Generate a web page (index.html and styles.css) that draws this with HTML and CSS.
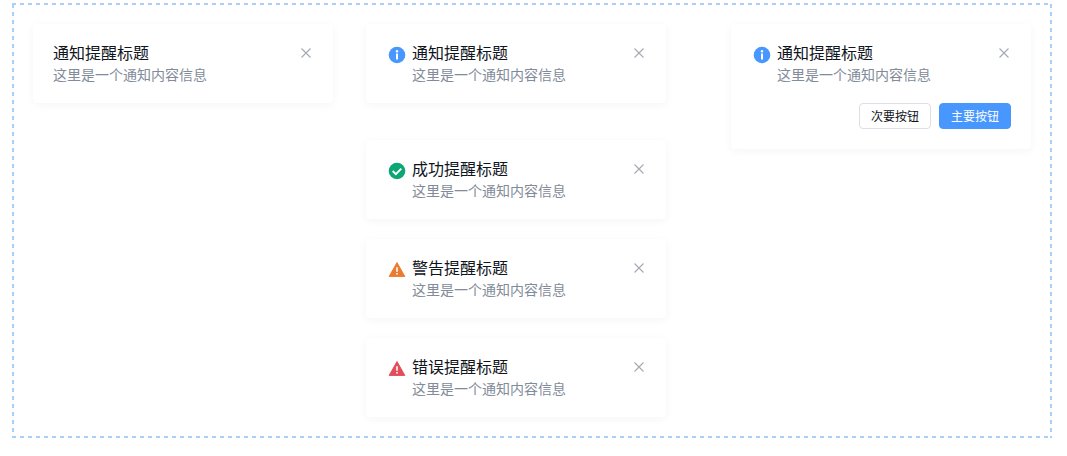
FILE: index.html
```html
<!DOCTYPE html>
<html lang="zh-CN">
<head>
<meta charset="utf-8">
<meta name="viewport" content="width=device-width, initial-scale=1">
<title>通知提醒</title>
<link rel="stylesheet" href="styles.css">
</head>
<body>
<svg class="sprite" aria-hidden="true">
  <symbol id="info" viewBox="0 0 18 18"><circle cx="9" cy="9" r="8.3" fill="#4797ff"/><circle cx="9" cy="5.2" r="1.2" fill="#fff"/><path d="M8 7.6h2v5.8H8z" fill="#fff"/></symbol>
  <symbol id="success" viewBox="0 0 18 18"><circle cx="9" cy="9" r="8.3" fill="#0aa673"/><path d="M4.7 9l3.1 3.1 5.5-5.5" fill="none" stroke="#fff" stroke-width="1.9"/></symbol>
  <symbol id="alert" viewBox="0 0 18 18"><path d="M9 1.6L16.8 15.4H1.2z" fill="currentColor" stroke="currentColor" stroke-width="1" stroke-linejoin="round"/><path d="M8.2 6.3h1.6v4.4H8.2zM8.2 12h1.6v1.6H8.2z" fill="#fff"/></symbol>
  <symbol id="close" viewBox="0 0 14 14"><path d="M2.5 2.5L11.5 11.5M11.5 2.5L2.5 11.5" fill="none" stroke="currentColor" stroke-width="1.1"/></symbol>
</svg>
<main class="frame">
  <section class="column">
    <article class="notice">
      <div class="body"><h2 class="title">通知提醒标题</h2><p class="text">这里是一个通知内容信息</p></div>
      <button class="close" type="button" aria-label="关闭"><svg><use href="#close"/></svg></button>
    </article>
  </section>
  <section class="column">
    <article class="notice notice-lead">
      <svg class="icon"><use href="#info"/></svg>
      <div class="body"><h2 class="title">通知提醒标题</h2><p class="text">这里是一个通知内容信息</p></div>
      <button class="close" type="button" aria-label="关闭"><svg><use href="#close"/></svg></button>
    </article>
    <article class="notice">
      <svg class="icon"><use href="#success"/></svg>
      <div class="body"><h2 class="title">成功提醒标题</h2><p class="text">这里是一个通知内容信息</p></div>
      <button class="close" type="button" aria-label="关闭"><svg><use href="#close"/></svg></button>
    </article>
    <article class="notice">
      <svg class="icon icon-warning"><use href="#alert"/></svg>
      <div class="body"><h2 class="title">警告提醒标题</h2><p class="text">这里是一个通知内容信息</p></div>
      <button class="close" type="button" aria-label="关闭"><svg><use href="#close"/></svg></button>
    </article>
    <article class="notice">
      <svg class="icon icon-error"><use href="#alert"/></svg>
      <div class="body"><h2 class="title">错误提醒标题</h2><p class="text">这里是一个通知内容信息</p></div>
      <button class="close" type="button" aria-label="关闭"><svg><use href="#close"/></svg></button>
    </article>
  </section>
  <section class="column column-end">
    <article class="notice notice-actions">
      <svg class="icon"><use href="#info"/></svg>
      <div class="body"><h2 class="title">通知提醒标题</h2><p class="text">这里是一个通知内容信息</p></div>
      <button class="close" type="button" aria-label="关闭"><svg><use href="#close"/></svg></button>
      <div class="actions">
        <button class="button" type="button">次要按钮</button>
        <button class="button button-primary" type="button">主要按钮</button>
      </div>
    </article>
  </section>
</main>
</body>
</html>
```
FILE: styles.css
```css
* {
  box-sizing: border-box;
}

body {
  margin: 0;
  padding: 3px 15px 18px 12px;
  background: #fff;
  font-family: "Noto Sans CJK SC", sans-serif;
}

.sprite {
  display: none;
}

/* Dashed outline: 4px dashes with 4px gaps along each side */
.frame {
  --dash: #a9cffc 0 4px, transparent 4px 8px;
  --dash-side: transparent 0 1px, #a9cffc 1px 5px, transparent 5px 8px;
  display: flex;
  align-items: flex-start;
  gap: 33px;
  padding: 21px;
  background:
    repeating-linear-gradient(90deg, var(--dash)) top / 100% 2px no-repeat,
    repeating-linear-gradient(90deg, var(--dash)) bottom / 100% 2px no-repeat,
    repeating-linear-gradient(180deg, var(--dash-side)) left / 2px 100% no-repeat,
    repeating-linear-gradient(180deg, var(--dash-side)) right / 2px 100% no-repeat;
}

.column {
  display: flex;
  flex-direction: column;
  flex: 0 1 300px;
  gap: 20px;
}

.column-end {
  margin-left: auto;
}

.notice {
  display: flex;
  flex-wrap: wrap;
  align-items: flex-start;
  padding: 17px 20px 18px;
  border-radius: 4px;
  background: #fff;
  box-shadow: 0 2px 10px rgba(0, 0, 0, 0.045);
}

.notice-lead {
  margin-bottom: 17px;
}

.notice-actions {
  padding-bottom: 20px;
}

.icon {
  width: 22px;
  height: 18px;
  margin: 5px 4px 0 0;
}

.icon-warning {
  color: #ed7b2f;
}

.icon-error {
  color: #e34d59;
}

.body {
  flex: 1;
}

.title,
.text {
  margin: 0;
  font-weight: 400;
  line-height: 22px;
}

.title {
  color: #10141c;
  font-size: 16px;
}

.text {
  color: #828b99;
  font-size: 14px;
}

.close {
  width: 14px;
  height: 14px;
  margin-top: 5px;
  padding: 0;
  border: 0;
  background: none;
  color: #a3a9b3;
  cursor: pointer;
}

.close svg {
  display: block;
  width: 14px;
  height: 14px;
}

.actions {
  display: flex;
  flex-basis: 100%;
  justify-content: flex-end;
  gap: 8px;
  margin-top: 18px;
}

.button {
  height: 26px;
  padding: 0 11px;
  border: 1px solid #dcdfe6;
  border-radius: 4px;
  background: #fff;
  color: #10141c;
  font-family: inherit;
  font-size: 12px;
  line-height: 22px;
  cursor: pointer;
}

.button-primary {
  border-color: #4797ff;
  background: #4797ff;
  color: #fff;
}
```
